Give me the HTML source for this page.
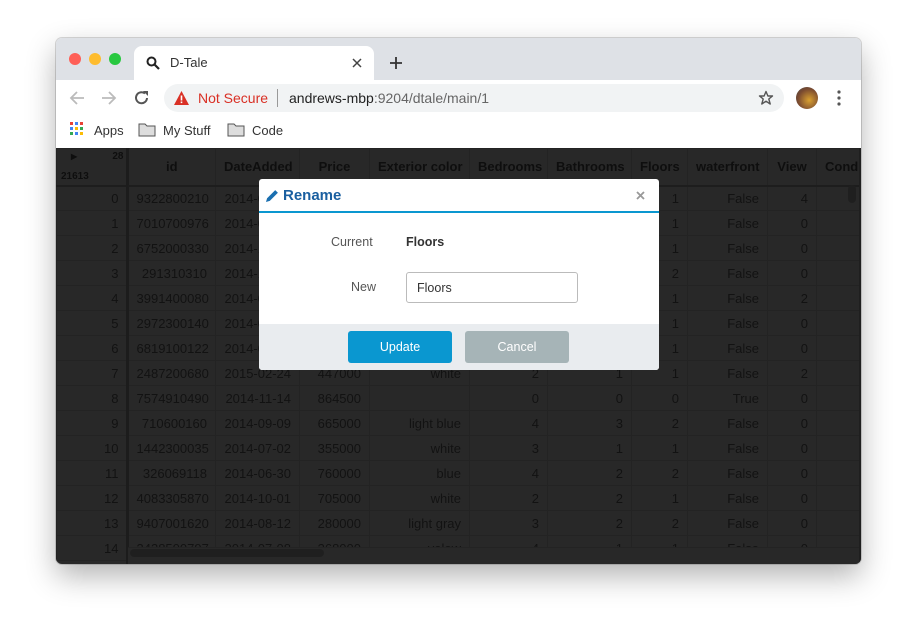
<!DOCTYPE html>
<html><head><meta charset="utf-8"><style>
*{box-sizing:border-box;margin:0;padding:0}
body{width:917px;height:639px;background:#fff;font-family:"Liberation Sans",sans-serif;position:relative;overflow:hidden}
.win{position:absolute;left:56px;top:38px;width:805px;height:526px;border-radius:6px;overflow:hidden;box-shadow:0 12px 30px rgba(0,0,0,.3),0 0 0 1px rgba(0,0,0,.15);background:#fff}
.tabbar{position:absolute;left:0;top:0;width:805px;height:42px;background:#dee1e6}
.dot{position:absolute;top:15px;width:12px;height:12px;border-radius:50%}
.tab{position:absolute;left:78px;top:8px;width:240px;height:34px;background:#fff;border-radius:8px 8px 0 0}
.tb{position:absolute;left:0;top:42px;width:805px;height:35px;background:#fff}
.omni{position:absolute;left:108px;top:4px;width:620px;height:28px;background:#f1f3f4;border-radius:14px}
.bm{position:absolute;left:0;top:77px;width:805px;height:33px;background:#fff;font-size:13px;color:#333}
.content{position:absolute;left:0;top:110px;width:805px;height:416px;background:#4a4a4a;overflow:hidden}
table{border-collapse:collapse;table-layout:fixed;position:absolute;left:0;top:0;font-size:13px;color:#222;width:813px}
td,th{border:1px solid #404040;height:25px;padding:0 8px;text-align:right;white-space:nowrap;overflow:hidden}
th{height:37px;font-weight:bold;text-align:center;color:#1a1a1a;border-bottom:2px solid #363636}
td.ix{border-right:2px solid #333}
.ov{position:absolute;left:0;top:0;width:805px;height:416px;background:rgba(0,0,0,.45)}
.modal{position:absolute;left:259px;top:179px;width:400px;height:191px;background:#fff;border-radius:3px;overflow:hidden;font-family:"Liberation Sans",sans-serif}
</style></head><body>
<div class="win">
 <div class="tabbar">
  <div class="dot" style="left:13px;background:#fe5f57"></div>
  <div class="dot" style="left:33px;background:#febc2e"></div>
  <div class="dot" style="left:53px;background:#28c840"></div>
  <div class="tab">
   <svg style="position:absolute;left:12px;top:10px" width="14" height="14" viewBox="0 0 14 14"><circle cx="5.5" cy="5.5" r="4" fill="none" stroke="#222" stroke-width="2"/><path d="M8.5 8.5L13 13" stroke="#222" stroke-width="2.2"/></svg>
   <span style="position:absolute;left:36px;top:9px;font-size:13px;color:#333">D-Tale</span>
   <svg style="position:absolute;left:218px;top:12px" width="10" height="10"><path d="M1 1L9 9M9 1L1 9" stroke="#444" stroke-width="1.5"/></svg>
  </div>
  <svg style="position:absolute;left:333px;top:18px" width="14" height="14"><path d="M7 1V13M1 7H13" stroke="#333" stroke-width="1.8"/></svg>
 </div>
 <div class="tb">
  <svg style="position:absolute;left:13px;top:10px" width="16" height="16"><path d="M15 8H2M8 2L2 8L8 14" fill="none" stroke="#bbb" stroke-width="1.8"/></svg>
  <svg style="position:absolute;left:45px;top:10px" width="16" height="16"><path d="M1 8H14M8 2L14 8L8 14" fill="none" stroke="#bbb" stroke-width="1.8"/></svg>
  <svg style="position:absolute;left:78px;top:10px" width="16" height="16"><path d="M13 8A5.5 5.5 0 1 1 11 3.5" fill="none" stroke="#555" stroke-width="2"/><path d="M9 1H14V6Z" fill="#555"/></svg>
  <div class="omni">
   <svg style="position:absolute;left:10px;top:7px" width="15" height="14" viewBox="0 0 15 14"><path d="M7.5 0L15 14H0Z" fill="#d93025"/><rect x="6.7" y="4.5" width="1.6" height="5" fill="#fff"/><rect x="6.7" y="10.5" width="1.6" height="1.6" fill="#fff"/></svg>
   <span style="position:absolute;left:34px;top:6px;font-size:14px;color:#d93025">Not Secure</span>
   <span style="position:absolute;left:113px;top:5px;width:1px;height:18px;background:#999"></span>
   <span style="position:absolute;left:125px;top:6px;font-size:14px;color:#222">andrews-mbp<span style="color:#666">:9204/dtale/main/1</span></span>
   <svg style="position:absolute;left:594px;top:6px" width="16" height="16" viewBox="0 0 16 16"><path d="M8 1.5L9.9 6H14.5L10.8 9L12.2 14L8 11.2L3.8 14L5.2 9L1.5 6H6.1Z" fill="none" stroke="#555" stroke-width="1.4" stroke-linejoin="round"/></svg>
  </div>
  <div style="position:absolute;left:740px;top:7px;width:22px;height:22px;border-radius:50%;background:radial-gradient(circle at 60% 60%,#d9a030,#7a4a30 60%,#444)"></div>
  <svg style="position:absolute;left:781px;top:10px" width="4" height="16"><circle cx="2" cy="2" r="1.6" fill="#555"/><circle cx="2" cy="8" r="1.6" fill="#555"/><circle cx="2" cy="14" r="1.6" fill="#555"/></svg>
 </div>
 <div class="bm">
  <svg style="position:absolute;left:14px;top:7px" width="14" height="14"><g><rect x="0" y="0" width="3" height="3" fill="#ea4335"/><rect x="5" y="0" width="3" height="3" fill="#4285f4"/><rect x="10" y="0" width="3" height="3" fill="#ea4335"/><rect x="0" y="5" width="3" height="3" fill="#4285f4"/><rect x="5" y="5" width="3" height="3" fill="#fbbc05"/><rect x="10" y="5" width="3" height="3" fill="#34a853"/><rect x="0" y="10" width="3" height="3" fill="#34a853"/><rect x="5" y="10" width="3" height="3" fill="#4285f4"/><rect x="10" y="10" width="3" height="3" fill="#fbbc05"/></g></svg>
  <span style="position:absolute;left:38px;top:8px">Apps</span>
  <svg style="position:absolute;left:82px;top:8px" width="18" height="14"><path d="M1 1h6l2 2h8v10H1z" fill="#ddd" stroke="#555"/></svg>
  <span style="position:absolute;left:107px;top:8px">My Stuff</span>
  <svg style="position:absolute;left:171px;top:8px" width="18" height="14"><path d="M1 1h6l2 2h8v10H1z" fill="#ddd" stroke="#555"/></svg>
  <span style="position:absolute;left:196px;top:8px">Code</span>
 </div>
 <div class="content">
  <table>
   <colgroup><col style="width:71px"><col style="width:88px"><col style="width:84px"><col style="width:70px"><col style="width:100px"><col style="width:78px"><col style="width:84px"><col style="width:56px"><col style="width:80px"><col style="width:49px"><col style="width:53px"></colgroup>
   <tr><th style="padding:0;position:relative;border-right:2px solid #333"><span style="position:absolute;left:14px;top:3px;font-size:8px">▶</span><span style="position:absolute;right:3px;top:2px;font-size:10px">28</span><span style="position:absolute;left:4px;bottom:3px;font-size:10px">21613</span></th><th>id</th><th>DateAdded</th><th>Price</th><th>Exterior color</th><th>Bedrooms</th><th>Bathrooms</th><th>Floors</th><th>waterfront</th><th>View</th><th style="text-align:left;padding-left:8px">Condi</th></tr>
   <tr><td class="ix">0</td><td>9322800210</td><td>2014-05-30</td><td>530000</td><td>white</td><td>3</td><td>1</td><td>1</td><td>False</td><td>4</td><td></td></tr>
   <tr><td class="ix">1</td><td>7010700976</td><td>2014-06-13</td><td>655000</td><td>white</td><td>3</td><td>1</td><td>1</td><td>False</td><td>0</td><td></td></tr>
   <tr><td class="ix">2</td><td>6752000330</td><td>2014-10-14</td><td>530000</td><td>white</td><td>3</td><td>1</td><td>1</td><td>False</td><td>0</td><td></td></tr>
   <tr><td class="ix">3</td><td>291310310</td><td>2014-10-09</td><td>500000</td><td>white</td><td>3</td><td>2</td><td>2</td><td>False</td><td>0</td><td></td></tr>
   <tr><td class="ix">4</td><td>3991400080</td><td>2014-06-26</td><td>530000</td><td>white</td><td>3</td><td>1</td><td>1</td><td>False</td><td>2</td><td></td></tr>
   <tr><td class="ix">5</td><td>2972300140</td><td>2014-07-21</td><td>500000</td><td>white</td><td>3</td><td>1</td><td>1</td><td>False</td><td>0</td><td></td></tr>
   <tr><td class="ix">6</td><td>6819100122</td><td>2014-05-12</td><td>655000</td><td>white</td><td>3</td><td>1</td><td>1</td><td>False</td><td>0</td><td></td></tr>
   <tr><td class="ix">7</td><td>2487200680</td><td>2015-02-24</td><td>447000</td><td>white</td><td>2</td><td>1</td><td>1</td><td>False</td><td>2</td><td></td></tr>
   <tr><td class="ix">8</td><td>7574910490</td><td>2014-11-14</td><td>864500</td><td></td><td>0</td><td>0</td><td>0</td><td>True</td><td>0</td><td></td></tr>
   <tr><td class="ix">9</td><td>710600160</td><td>2014-09-09</td><td>665000</td><td>light blue</td><td>4</td><td>3</td><td>2</td><td>False</td><td>0</td><td></td></tr>
   <tr><td class="ix">10</td><td>1442300035</td><td>2014-07-02</td><td>355000</td><td>white</td><td>3</td><td>1</td><td>1</td><td>False</td><td>0</td><td></td></tr>
   <tr><td class="ix">11</td><td>326069118</td><td>2014-06-30</td><td>760000</td><td>blue</td><td>4</td><td>2</td><td>2</td><td>False</td><td>0</td><td></td></tr>
   <tr><td class="ix">12</td><td>4083305870</td><td>2014-10-01</td><td>705000</td><td>white</td><td>2</td><td>2</td><td>1</td><td>False</td><td>0</td><td></td></tr>
   <tr><td class="ix">13</td><td>9407001620</td><td>2014-08-12</td><td>280000</td><td>light gray</td><td>3</td><td>2</td><td>2</td><td>False</td><td>0</td><td></td></tr>
   <tr><td class="ix">14</td><td>3438500797</td><td>2014-07-08</td><td>368000</td><td>yelow</td><td>4</td><td>1</td><td>1</td><td>False</td><td>0</td><td></td></tr>
  </table>
  <div style="position:absolute;left:72px;top:399px;width:733px;height:17px;background:#4a4a4a;border-top:1px solid #404040"></div>
  <div style="position:absolute;left:70px;top:0;width:2px;height:416px;background:#333"></div>
  <div style="position:absolute;left:74px;top:401px;width:194px;height:8px;border-radius:4px;background:#3a3a3a"></div>
  <div style="position:absolute;left:792px;top:37px;width:8px;height:18px;border-radius:4px;background:#3a3a3a"></div>
  <div style="position:absolute;left:803px;top:0;width:2px;height:416px;background:#3a3a3a"></div>
  <div class="ov"></div>
 </div>
</div>
<div class="modal">
 <div style="height:34px;border-bottom:2px solid #0a97d0;position:relative">
  <svg style="position:absolute;left:7px;top:10px" width="13" height="13" viewBox="0 0 12 12"><path d="M0 12l1-3.5L8.5 1 11 3.5 3.5 11z" fill="#1a6fb0"/></svg>
  <span style="position:absolute;left:24px;top:8px;font-size:15px;font-weight:bold;color:#1a5fa0">Rename</span>
  <svg style="position:absolute;left:377px;top:12px" width="9" height="9"><path d="M1 1L8 8M8 1L1 8" stroke="#999" stroke-width="1.8"/></svg>
 </div>
 <span style="position:absolute;left:72px;top:56px;font-size:12.5px;color:#555">Current</span>
 <span style="position:absolute;left:147px;top:56px;font-size:12.5px;color:#333;font-weight:bold">Floors</span>
 <span style="position:absolute;left:92px;top:101px;font-size:12.5px;color:#555">New</span>
 <div style="position:absolute;left:147px;top:93px;width:172px;height:31px;border:1px solid #bbb;border-radius:3px;font-size:12.5px;color:#333;padding:8px 10px">Floors</div>
 <div style="position:absolute;left:0;top:145px;width:400px;height:46px;background:#e9ecef">
  <div style="position:absolute;left:89px;top:7px;width:104px;height:32px;background:#0a97d0;border-radius:3px;color:#fff;font-size:12.5px;text-align:center;line-height:32px">Update</div>
  <div style="position:absolute;left:206px;top:7px;width:104px;height:32px;background:#a6b4b7;border-radius:3px;color:#fff;font-size:12.5px;text-align:center;line-height:32px">Cancel</div>
 </div>
</div>
</body></html>
